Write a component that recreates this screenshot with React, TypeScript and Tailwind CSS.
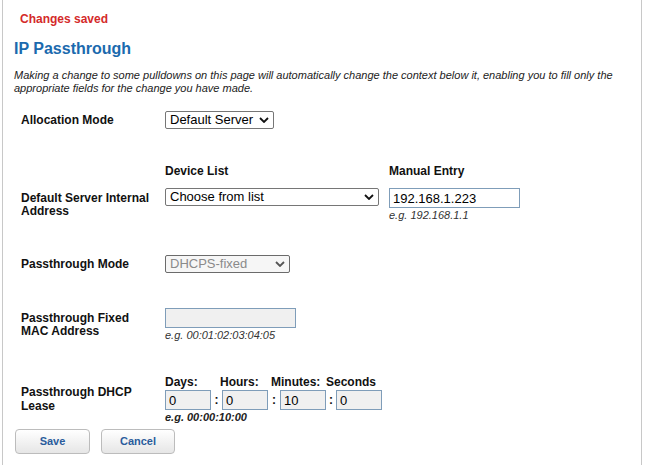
function Chevron({ disabled }: { disabled?: boolean }) {
  return (
    <svg
      viewBox="0 0 10 6"
      className="pointer-events-none absolute right-[5px] top-1/2 h-[6px] w-[10px] -translate-y-1/2"
    >
      <path d="M1 1l4 4 4-4" fill="none" stroke={disabled ? "#555" : "#111"} strokeWidth="1.8" />
    </svg>
  );
}

function Select({ value, width, disabled }: { value: string; width: string; disabled?: boolean }) {
  return (
    <div className={`relative ${width}`}>
      <select
        disabled={disabled}
        defaultValue={value}
        className={
          disabled
            ? "block h-[18px] w-full appearance-none rounded-[2px] border border-[#6b6b6b] bg-[#f6f6f6] pl-[4px] text-[13px] leading-[16px] text-[#8a8a8a]"
            : "block h-[18px] w-full appearance-none rounded-[2px] border border-[#767676] bg-white pl-[4px] text-[13px] leading-[16px] text-black"
        }
      >
        <option>{value}</option>
      </select>
      <Chevron disabled={disabled} />
    </div>
  );
}

const label = "w-[144px] shrink-0 text-[12px] font-bold leading-[13px] text-[#111]";
const hint = "mt-[1px] text-[11px] italic leading-[12px] text-[#333]";
const fieldBox = "h-[20px] border border-[#7f9db9] bg-[#f0f0f0] px-[3px] text-[13px] leading-[18px] text-black outline-none";
const button =
  "h-[25px] rounded-[4px] border border-[#bcbcbc] bg-gradient-to-b from-white to-[#e6e6e6] text-[11px] font-bold text-[#2a5c9c]";

export default function App() {
  return (
    <div className="min-h-[465px] bg-white font-['Liberation_Sans',Arial,sans-serif]">
      <div className="ml-[2px] min-h-[465px] w-[640px] border-x border-[#c8c8c8] pl-[11px] pt-[12px]">
        <p className="ml-[6px] text-[12px] font-bold leading-[14px] text-[#d42a2a]">Changes saved</p>
        <h1 className="mt-[13px] text-[16px] font-bold leading-[20px] text-[#1b6aae]">IP Passthrough</h1>
        <p className="mt-[10px] w-[612px] text-[11px] italic leading-[13px] text-[#222]">
          Making a change to some pulldowns on this page will automatically change the context below it, enabling you to fill only the appropriate fields for the change you have made.
        </p>

        <div className="ml-[7px]">
          <div className="mt-[16px] flex items-center">
            <span className={label}>Allocation Mode</span>
            <Select value="Default Server" width="w-[109px]" />
          </div>

          <div className="mt-[35px] flex text-[12px] font-bold leading-[14px] text-[#111]">
            <span className="ml-[144px] w-[224px]">Device List</span>
            <span>Manual Entry</span>
          </div>

          <div className="mt-[10px] flex items-center">
            <span className={label}>
              Default Server Internal
              <br />
              Address
            </span>
            <div className="flex items-start">
              <div className="pb-[14px]">
                <Select value="Choose from list" width="w-[214px]" />
              </div>
              <div className="ml-[10px]">
                <input
                  defaultValue="192.168.1.223"
                  className="block h-[20px] w-[131px] border border-[#7f9db9] bg-white px-[3px] text-[13px] leading-[18px] text-black outline-none"
                />
                <p className={hint}>e.g. 192.168.1.1</p>
              </div>
            </div>
          </div>

          <div className="mt-[34px] flex items-center">
            <span className={label}>Passthrough Mode</span>
            <Select value="DHCPS-fixed" width="w-[125px]" disabled />
          </div>

          <div className="mt-[35px] flex items-center">
            <span className={label}>
              Passthrough Fixed
              <br />
              MAC Address
            </span>
            <div>
              <input disabled className={`${fieldBox} block w-[131px]`} />
              <p className={hint}>e.g. 00:01:02:03:04:05</p>
            </div>
          </div>

          <div className="mt-[34px] flex items-center">
            <span className="w-[144px] shrink-0 text-[12px] font-bold leading-[14px] text-[#111]">
              Passthrough DHCP
              <br />
              Lease
            </span>
            <div>
              <div className="flex text-[12px] font-bold leading-[15px] text-[#111]">
                <span className="w-[55px]">Days:</span>
                <span className="w-[51px]">Hours:</span>
                <span className="w-[55px]">Minutes:</span>
                <span>Seconds</span>
              </div>
              <div className="flex items-center">
                <input defaultValue="0" className={`${fieldBox} w-[46px]`} />
                <span className="w-[11px] text-center text-[12px] font-bold text-[#111]">:</span>
                <input defaultValue="0" className={`${fieldBox} w-[46px]`} />
                <span className="w-[12px] text-center text-[12px] font-bold text-[#111]">:</span>
                <input defaultValue="10" className={`${fieldBox} w-[46px]`} />
                <span className="w-[10px] text-center text-[12px] font-bold text-[#111]">:</span>
                <input defaultValue="0" className={`${fieldBox} w-[46px]`} />
              </div>
              <p className="mt-[1px] text-[11px] font-bold italic leading-[12px] text-[#222]">e.g. 00:00:10:00</p>
            </div>
          </div>
        </div>

        <div className="ml-[1px] mt-[6px] flex gap-[11px]">
          <button className={`${button} w-[75px]`}>Save</button>
          <button className={`${button} w-[74px]`}>Cancel</button>
        </div>
      </div>
    </div>
  );
}
